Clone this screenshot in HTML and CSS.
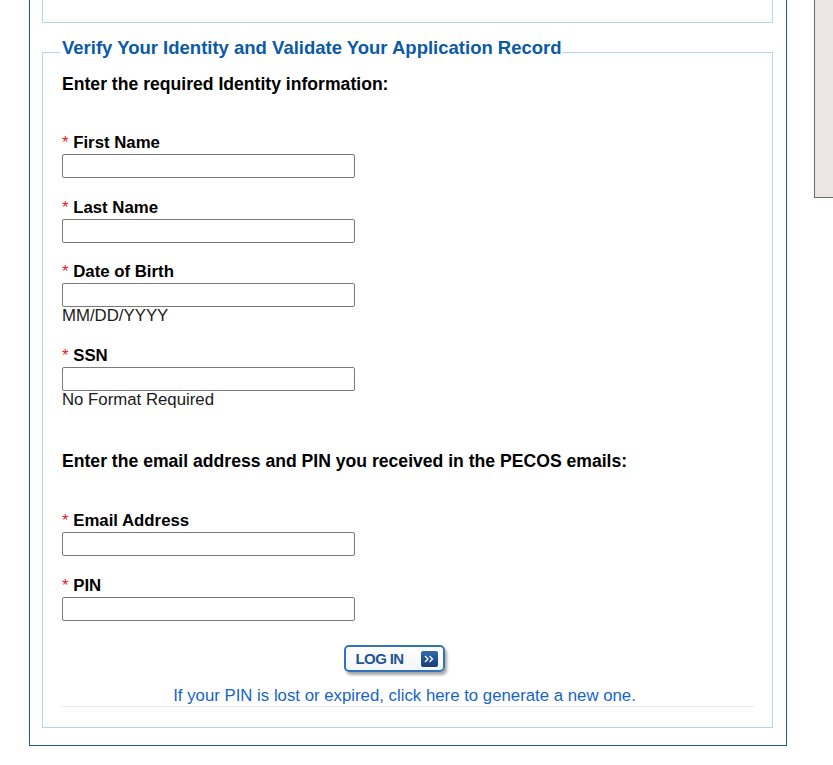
FILE: index.html
```html
<!DOCTYPE html>
<html lang="en">
<head>
<meta charset="utf-8">
<title>Verify Your Identity</title>
<link rel="stylesheet" href="styles.css">
</head>
<body>
<div class="layout">
  <div class="page">
    <div class="prev-section"></div>
    <fieldset class="verify">
      <legend>Verify Your Identity and Validate Your Application Record</legend>
      <h2 class="intro">Enter the required Identity information:</h2>
      <div class="field first">
        <label><span class="req">*</span> First Name</label>
        <input type="text">
      </div>
      <div class="field">
        <label><span class="req">*</span> Last Name</label>
        <input type="text">
      </div>
      <div class="field">
        <label><span class="req">*</span> Date of Birth</label>
        <input type="text">
        <div class="hint">MM/DD/YYYY</div>
      </div>
      <div class="field">
        <label><span class="req">*</span> SSN</label>
        <input type="text">
        <div class="hint">No Format Required</div>
      </div>
      <h2 class="intro second">Enter the email address and PIN you received in the PECOS emails:</h2>
      <div class="field first lower">
        <label><span class="req">*</span> Email Address</label>
        <input type="text">
      </div>
      <div class="field lower">
        <label><span class="req">*</span> PIN</label>
        <input type="text">
      </div>
      <div class="actions">
        <button class="login-btn" type="button">
          <span class="login-text">LOG IN</span>
          <span class="login-icon">
            <svg width="11" height="8" viewBox="0 0 11 8"><path d="M1 1 L4 4 L1 7 M5.5 1 L8.5 4 L5.5 7" fill="none" stroke="#fff" stroke-width="1.3"/></svg>
          </span>
        </button>
      </div>
      <div class="pin-link">
        <a href="#">If your PIN is lost or expired, click here to generate a new one.</a>
      </div>
    </fieldset>
  </div>
  <div class="side-panel"></div>
</div>
</body>
</html>
```

FILE: styles.css
```css
html, body {
  margin: 0;
  padding: 0;
  background: #ffffff;
}

body {
  font-family: "Liberation Sans", Arial, sans-serif;
  color: #000;
}

.layout {
  display: flex;
  align-items: flex-start;
}

.page {
  margin-left: 29px;
  width: 758px;
  flex: none;
  box-sizing: border-box;
  border: 1px solid #1c5797;
  border-top: none;
  padding: 0 13px 17px 12px;
}

.prev-section {
  height: 22px;
  border: 1px solid #b4d5ef;
  border-top: none;
}

.verify {
  margin: 14px 0 0;
  padding: 0 19px 20px;
  border: 1px solid #b4d5ef;
  min-width: 0;
}

.verify legend {
  margin-left: -2px;
  padding: 1px 0 9px 2px;
  font-size: 18.5px;
  font-weight: bold;
  line-height: 20px;
  color: #0b5aa6;
}

.intro {
  margin: 7px 0 0;
  font-size: 17.6px;
  font-weight: bold;
  line-height: 20px;
}

.intro.second {
  margin-top: 41px;
}

.field {
  margin-top: 19.5px;
}

.field.lower {
  margin-top: 20.5px;
}

.field.first {
  margin-top: 39px;
}

.field.first.lower {
  margin-top: 40px;
}

.field label {
  display: block;
  font-size: 16.8px;
  font-weight: bold;
  line-height: 20px;
}

.req {
  color: #e0211b;
  font-weight: normal;
}

.field input {
  display: block;
  margin: 1px 0 0;
  width: 293px;
  height: 24px;
  box-sizing: border-box;
  border: 1px solid #7a7a7a;
  border-radius: 2px;
  padding: 0 3px;
  font: 14px "Liberation Sans", Arial, sans-serif;
  background: #fff;
}

.hint {
  margin-top: -1px;
  font-size: 16.8px;
  line-height: 20px;
  color: #1a1a1a;
}

.actions {
  margin-top: 24px;
  display: flex;
  justify-content: center;
  padding-right: 27px;
}

.login-btn {
  display: flex;
  align-items: center;
  justify-content: space-between;
  width: 101px;
  height: 27px;
  box-sizing: border-box;
  padding: 0 5px 0 10px;
  border: 2px solid #3573b8;
  border-radius: 5px;
  background: linear-gradient(#ffffff, #f2f5f9);
  box-shadow: 2px 3px 3px rgba(0, 0, 0, 0.35);
  cursor: pointer;
}

.login-text {
  font: bold 15px "Liberation Sans", Arial, sans-serif;
  color: #1f5596;
  letter-spacing: -0.6px;
}

.login-icon {
  display: flex;
  align-items: center;
  justify-content: center;
  width: 17px;
  height: 16px;
  border-radius: 2px;
  background: linear-gradient(#3568ab, #163e78);
}

.pin-link {
  margin-top: 14px;
  padding: 0 6px 0 0;
  border-bottom: 1px dotted #d6d6d6;
  text-align: center;
  line-height: 20px;
}

.pin-link a {
  font-size: 16.8px;
  color: #1565c8;
  text-decoration: none;
}

.side-panel {
  flex: 1;
  margin-left: 27px;
  height: 197px;
  border-left: 1px solid #6b6b6b;
  border-bottom: 1px solid #6b6b6b;
  background: #ebe5e5;
}
```
